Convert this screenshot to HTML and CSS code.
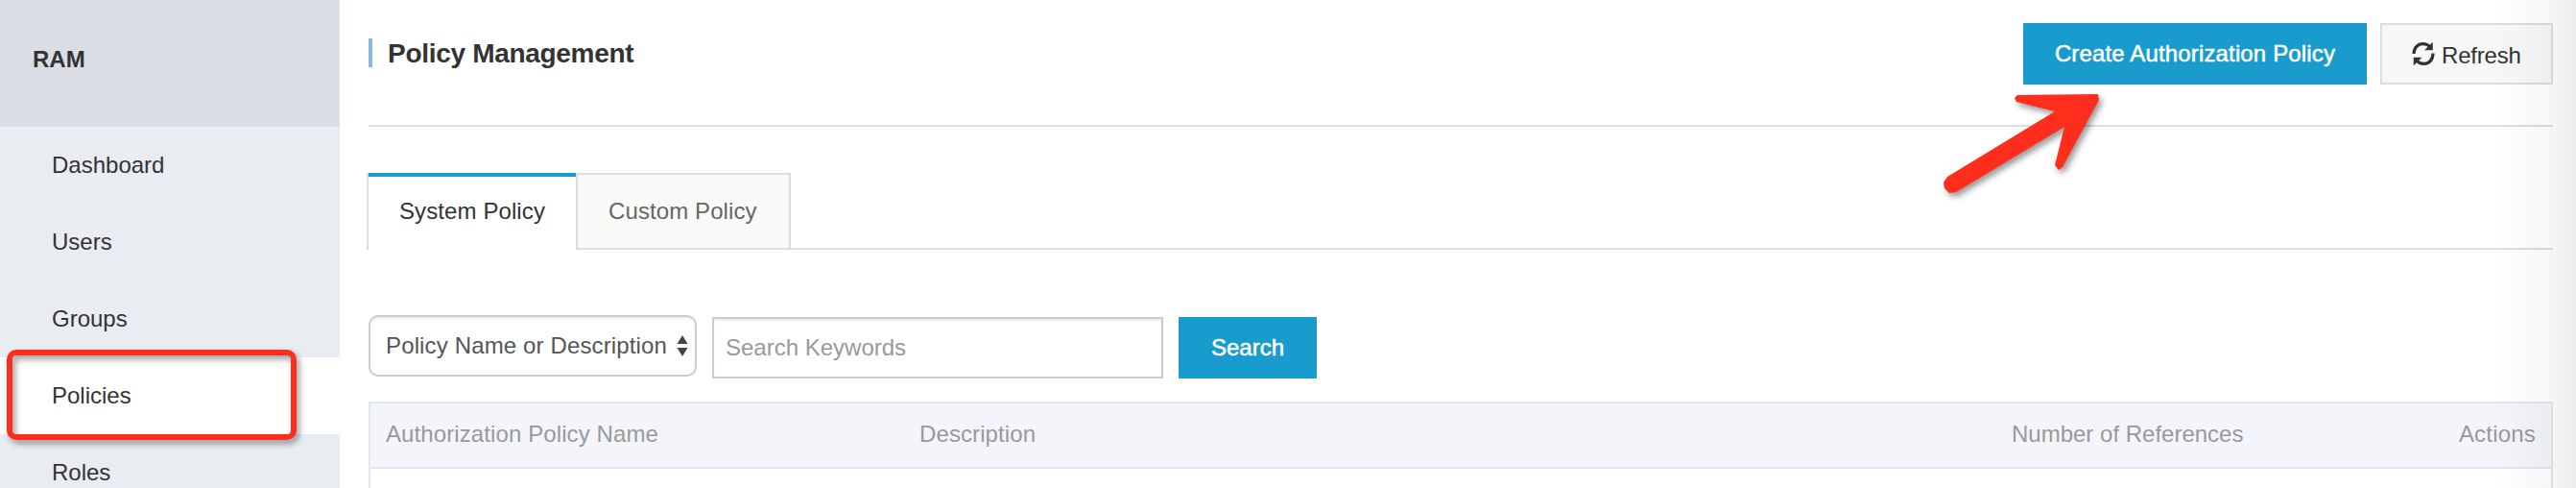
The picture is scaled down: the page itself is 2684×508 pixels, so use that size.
FILE: index.html
```html
<!DOCTYPE html>
<html lang="en">
<head>
<meta charset="utf-8">
<title>Policy Management</title>
<link rel="stylesheet" href="styles.css">
</head>
<body>
<div class="app">
  <aside class="sidebar">
    <div class="brand"><span>RAM</span></div>
    <nav class="nav">
      <a class="nav-item"><span>Dashboard</span></a>
      <a class="nav-item"><span>Users</span></a>
      <a class="nav-item"><span>Groups</span></a>
      <a class="nav-item active"><span>Policies</span></a>
      <a class="nav-item"><span>Roles</span></a>
    </nav>
  </aside>
  <main class="main">
    <header class="header">
      <h1 class="title">Policy Management</h1>
      <div class="actions">
        <button class="btn primary create">Create Authorization Policy</button>
        <button class="btn refresh">
          <svg class="refresh-icon" width="24" height="26" viewBox="0 0 24 26">
            <g fill="none" stroke="#333" stroke-width="3.2">
              <path d="M2 13C2 6.500 6.500 2.600 11.500 2.600C14.500 2.600 17.500 4 19.500 6.500"/>
              <path d="M22 12.500C22 19.500 17.500 23.400 12.500 23.400C9.500 23.400 6.500 22 4.500 19.500"/>
            </g>
            <path fill="#333" d="M21.800 0.800v8.400h-8.800zM1.800 25.200v-8.400h8.800z"/>
          </svg>
          <span>Refresh</span>
        </button>
      </div>
    </header>
    <div class="tabs">
      <div class="tab selected"><span>System Policy</span></div>
      <div class="tab"><span>Custom Policy</span></div>
      <div class="tab-rest"></div>
    </div>
    <div class="filters">
      <div class="select">
        <span>Policy Name or Description</span>
        <svg width="12" height="22" viewBox="0 0 12 22"><path fill="#444" d="M0.500 9L6 0L11.500 9zM0.500 13L6 22L11.500 13z"/></svg>
      </div>
      <input class="keywords" type="text" placeholder="Search Keywords">
      <button class="btn primary search">Search</button>
    </div>
    <div class="table">
      <div class="table-head">
        <span class="name">Authorization Policy Name</span>
        <span class="desc">Description</span>
        <span class="refs">Number of References</span>
        <span class="act">Actions</span>
      </div>
    </div>
  </main>
  <div class="edge-shade"></div>
  <div class="highlight"></div>
  <svg class="arrow" width="200" height="130" viewBox="0 0 200 130">
    <path fill="#ff2d1c" d="M92 14L176 13L177 19L139 89L135 92L131 87L141 47L28 115L21 116L16 111L15 105L19 99L131 31L91 21L89 17Z"/>
  </svg>
</div>
</body>
</html>
```

FILE: styles.css
```css
* { box-sizing: border-box; }
body { margin: 0; background: #fff; color: #333; font: 24px/32px "Liberation Sans", Arial, sans-serif; }
.app { position: relative; display: flex; width: 2684px; height: 508px; overflow: hidden; }
.sidebar { width: 354px; background: #e9edf2; flex: none; }
.brand { height: 132px; padding: 46px 34px; background: #d9dee5; font-weight: bold; border-bottom: 2px solid #d9dde2; }
.nav { display: flex; flex-direction: column; }
.nav-item { height: 80px; padding: 24px 54px; }
.nav-item.active { background: #fff; }
.main { flex: 1; padding: 0 24px 0 28px; display: flex; flex-direction: column; }
.header { height: 132px; margin-left: 2px; border-bottom: 2px solid #ddd; display: flex; justify-content: space-between; flex: none; }
.title { margin: 40px 0 0; height: 30px; border-left: 4px solid #88b7e0; padding-left: 16px; font-size: 28px; line-height: 32px; letter-spacing: -0.3px; }
.actions { display: flex; gap: 14px; padding-top: 24px; }
.btn { height: 64px; border: 0; padding: 0; margin: 0; font: inherit; color: #333; border-radius: 0; white-space: nowrap; }
.primary { background: #1a9bcd; color: #fff; -webkit-text-stroke: 0.5px #fff; }
.create { width: 358px; padding-bottom: 1px; letter-spacing: 0.15px; }
.refresh { width: 180px; background: #f7f7f7; border: 2px solid #ddd; display: flex; align-items: center; gap: 7px; padding: 3px 0 0 31px; letter-spacing: -0.2px; }
.refresh-icon { margin-top: -3px; }
.tabs { display: flex; height: 80px; margin-top: 48px; flex: none; }
.tab { width: 224px; border: 2px solid #ddd; background: #fbfaf8; color: #666; padding: 22px 0 0 32px; white-space: nowrap; letter-spacing: 0.1px; }
.tab.selected { width: 218px; border-width: 0 0 0 2px; background: linear-gradient(#1a9fca, #1a9fca) 0 0 / 100% 4px no-repeat #fff; color: #333; padding-top: 24px; }
.tab-rest { flex: 1; border-bottom: 2px solid #ddd; }
.filters { display: flex; margin: 68px 0 0 2px; height: 66px; flex: none; }
.select { width: 342px; height: 64px; border: 2px solid #ccc; border-radius: 10px; padding: 14px 0 0 16px; display: flex; gap: 10px; color: #555; box-shadow: inset 0 2px 2px #eee; white-space: nowrap; letter-spacing: 0.14px; }
.select svg { margin-top: 5px; }
.keywords { width: 470px; height: 64px; margin: 2px 0 0 16px; border: 2px solid #ccc; padding: 0 12px; font: inherit; box-shadow: inset 0 2px 2px #eee; }
.keywords::placeholder { color: #999; opacity: 1; }
.search { width: 144px; margin: 2px 0 0 16px; }
.table { margin: 24px 0 0 2px; flex: 1; border: 2px solid #e1e6eb; border-bottom: 0; }
.table-head { height: 68px; border-bottom: 2px solid #e1e6eb; background: #f4f5fa; color: #999; display: flex; padding: 16px 16px 0; letter-spacing: 0.1px; }
.name { width: 556px; }
.desc { width: 1138px; }
.refs { letter-spacing: 0; }
.act { margin-left: auto; letter-spacing: 0.2px; }
.edge-shade { position: absolute; top: 0; right: 0; width: 84px; height: 508px; background: linear-gradient(to right, transparent, rgba(0,0,0,.03) 65%, rgba(0,0,0,.07)); }
.highlight { position: absolute; left: 7px; top: 364px; width: 302px; height: 94px; border: 6px solid #ff2d1c; border-radius: 10px; filter: drop-shadow(3px 4px 3px rgba(0,0,0,.4)); }
.arrow { position: absolute; left: 2010px; top: 85px; filter: drop-shadow(3px 4px 3px rgba(0,0,0,.4)); overflow: visible; }
```
